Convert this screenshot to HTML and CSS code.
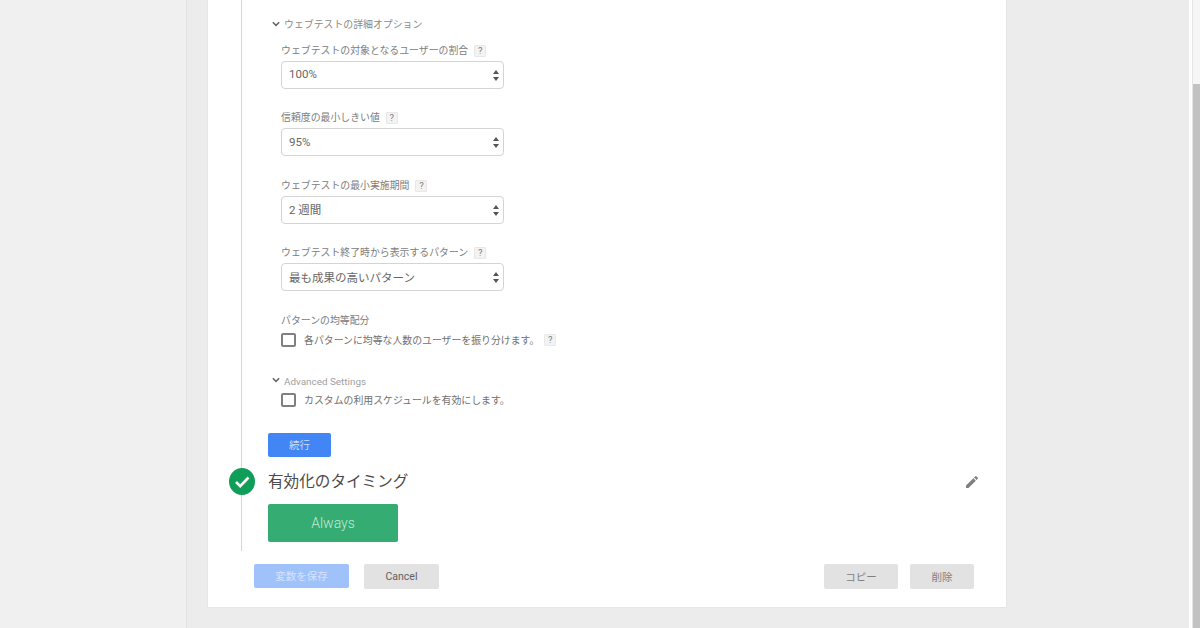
FILE: index.html
```html
<!DOCTYPE html>
<html lang="ja">
<head>
<meta charset="utf-8">
<title>変数</title>
<link rel="stylesheet" href="styles.css">
</head>
<body>
<div class="page">
  <div class="rail-left"></div>
  <main class="card">
    <div class="steps">
      <section class="group first">
        <div class="toggle"><svg class="chev" viewBox="0 0 8 6"><path d="M.8 1.2L4 4.4l3.2-3.2" /></svg><span>ウェブテストの詳細オプション</span></div>
        <div class="fields">
          <div class="field">
            <label class="lbl">ウェブテストの対象となるユーザーの割合<span class="q">?</span></label>
            <div class="select"><span>100%</span><i class="arrows"></i></div>
          </div>
          <div class="field">
            <label class="lbl">信頼度の最小しきい値<span class="q">?</span></label>
            <div class="select"><span>95%</span><i class="arrows"></i></div>
          </div>
          <div class="field">
            <label class="lbl">ウェブテストの最小実施期間<span class="q">?</span></label>
            <div class="select"><span>2 週間</span><i class="arrows"></i></div>
          </div>
          <div class="field">
            <label class="lbl">ウェブテスト終了時から表示するパターン<span class="q">?</span></label>
            <div class="select"><span>最も成果の高いパターン</span><i class="arrows"></i></div>
          </div>
          <div class="field last">
            <label class="lbl">パターンの均等配分</label>
            <div class="check"><b class="box"></b><span>各パターンに均等な人数のユーザーを振り分けます。</span><span class="q q-wide">?</span></div>
          </div>
        </div>
      </section>
      <section class="group adv">
        <div class="toggle"><svg class="chev" viewBox="0 0 8 6"><path d="M.8 1.2L4 4.4l3.2-3.2" /></svg><span>Advanced Settings</span></div>
        <div class="fields">
          <div class="check tight"><b class="box"></b><span>カスタムの利用スケジュールを有効にします。</span></div>
        </div>
      </section>
      <button class="btn primary next">続行</button>
      <section class="trigger">
        <div class="trigger-head">
          <span class="done"><svg viewBox="0 0 26 26"><path d="M7 13.5l4.2 4.2L19.5 9" /></svg></span>
          <h2>有効化のタイミング</h2>
          <svg class="edit" viewBox="0 0 24 24"><path d="M3 17.25V21h3.75L17.81 9.94l-3.75-3.75L3 17.25zM20.71 7.04a1 1 0 0 0 0-1.41l-2.34-2.34a1 1 0 0 0-1.41 0l-1.83 1.83 3.75 3.75 1.83-1.83z"/></svg>
        </div>
        <div class="chip">Always</div>
      </section>
    </div>
    <footer class="actions">
      <button class="btn disabled">変数を保存</button>
      <button class="btn grey cancel">Cancel</button>
      <span class="spacer"></span>
      <button class="btn grey muted copy">コピー</button>
      <button class="btn grey muted del">削除</button>
    </footer>
  </main>
  <div class="rail-right"></div>
  <div class="scrollbar"><div class="thumb"></div></div>
</div>
</body>
</html>
```
FILE: styles.css
```css
* { box-sizing: border-box; }
html, body { margin: 0; height: 100%; overflow: hidden; }
body {
  background: #ececec;
  font-family: Roboto, "Noto Sans CJK JP", "Liberation Sans", sans-serif;
  color: #666;
}
.page { display: flex; width: 1200px; height: 628px; }
.rail-left { width: 187px; border-right: 1px solid #e2e2e2; background: #f0f0f0; flex: none; }
.card {
  width: 800px; height: 608px; flex: none;
  margin-left: 20px;
  background: #fff;
  border: solid #e6e6e6; border-width: 0 1px 1px 1px;
  display: flex; flex-direction: column;
  padding-left: 33px;
}
.rail-right { flex: 1; }
.steps {
  height: 551px; flex: none;
  border-left: 1px solid #d6d6d6;
  padding-left: 26px;
  position: relative;
}
.group.first { padding-top: 16px; }
.toggle {
  display: flex; align-items: center; gap: 4px;
  height: 16px; padding-top: 2px;
  font-size: 9.9px; line-height: 16px; color: #8a8a8a;
  margin-left: 4px;
}
.chev { width: 8px; height: 6px; flex: none; margin-top: -3px; }
.chev path { fill: none; stroke: #666; stroke-width: 1.5; }
.fields { padding-left: 13px; }
.field { height: 58px; margin: 9.5px 0 0; }
.lbl { display: flex; align-items: center; font-size: 9.9px; line-height: 16px; color: #7c7c7c; height: 16px; padding-top: 2px; }
.q {
  display: inline-block; width: 12px; height: 12px; margin-left: 6px;
  background: #f3f3f3; border: 1px solid #e8e8e8; border-radius: 1px;
  font-size: 9.5px; line-height: 10px; text-align: center; color: #808080;
}
.q-wide { margin-left: 5px; }
.select {
  width: 222.5px; height: 28px; margin-top: 3px;
  border: 1px solid #d4d4d4; border-radius: 4px;
  background: #fff; display: flex; align-items: center; justify-content: space-between;
  padding: 0 4px 1px 7px;
  font-size: 11.5px; color: #666;
}
.arrows { position: relative; width: 6px; height: 11px; display: block; top: 1px; }
.arrows::before, .arrows::after {
  content: ""; position: absolute; left: 0;
  border-left: 3px solid transparent; border-right: 3px solid transparent;
}
.arrows::before { top: 0; border-bottom: 4px solid #555; }
.arrows::after { bottom: 0; border-top: 4px solid #555; }
.field.last { height: auto; }
.check { display: flex; align-items: center; height: 16px; margin-top: 4px; font-size: 9.9px; color: #707070; }
.box { width: 15px; height: 14px; border: 2px solid #808080; border-radius: 2px; margin-right: 8px; flex: none; background: #fff; }
.adv { margin-top: 25px; }
.adv .toggle { color: #a0a0a0; }
.check.tight { margin-top: 3px; }
.btn {
  display: block; border: 0; border-radius: 2px; font-family: inherit;
  text-align: center; padding: 0 0 1px;
}
.primary { background: #4285f4; color: #c9dcfb; width: 63px; height: 24px; font-size: 10.5px; }
.next { margin-top: 25px; }
.trigger-head { display: flex; align-items: center; height: 47px; padding-top: 2px; }
.done {
  position: absolute; left: -13px; width: 26px; height: 27px; border-radius: 50%;
  background: #0f9d58; display: block;
}
.done svg { width: 26px; height: 27px; display: block; }
.done path { fill: none; stroke: #fff; stroke-width: 2.6; }
h2 { margin: -2px 0 0; font-size: 15.6px; font-weight: 400; color: #4a4a4a; flex: 1; }
.edit { width: 16px; height: 16px; fill: #808080; margin: 2px 26px 0 0; }
.chip {
  width: 130px; height: 38.5px;
  background: #34ac72; color: #c6e9d7; border-radius: 2px;
  font-size: 14px; line-height: 38px; text-align: center; font-weight: 300;
}
.actions { display: flex; align-items: flex-start; padding: 13px 32px 0 13px; }
.disabled { background: #a0c2fa; color: #d3e2fc; width: 95px; height: 24px; font-size: 10.5px; }
.grey { background: #e2e2e2; color: #606060; height: 25px; font-size: 10.5px; }
.muted { color: #808080; }
.cancel { width: 75px; margin-left: 15px; }
.spacer { flex: 1; }
.copy { width: 74px; }
.del { width: 64px; margin-left: 12px; }
.scrollbar {
  position: absolute; left: 1192px; top: 0; width: 8px; height: 628px;
  background: #f6f6f6; border-left: 1px solid #e4e4e4;
  box-shadow: -3px 0 0 #fff;
}
.thumb { position: absolute; left: 0; right: 0; top: 84px; bottom: 0; background: #c2c2c2; }
```
